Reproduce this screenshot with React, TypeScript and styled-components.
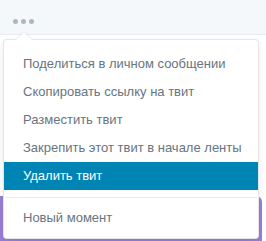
import React, { useState } from 'react';
import styled, { createGlobalStyle } from 'styled-components';

const GlobalStyle = createGlobalStyle`
  html, body {
    margin: 0;
    padding: 0;
    background: #fff;
    font-family: "Liberation Sans", Arial, sans-serif;
  }
`;

const items = [
  'Поделиться в личном сообщении',
  'Скопировать ссылку на твит',
  'Разместить твит',
  'Закрепить этот твит в начале ленты',
  'Удалить твит',
];

export default function App() {
  const [active, setActive] = useState(4);

  return (
    <Page>
      <GlobalStyle />
      <Footer>
        <MoreButton aria-label="Ещё">
          <Dot />
          <Dot />
          <Dot />
        </MoreButton>
      </Footer>
      <Body>
        <Spacer />
        <PurpleCard />
      </Body>

      <Menu>
        <Caret />
        {items.map((label, i) => (
          <Item key={label} selected={i === active} onMouseEnter={() => setActive(i)}>
            {label}
          </Item>
        ))}
        <Divider />
        <Item selected={active === 5} onMouseEnter={() => setActive(5)}>
          Новый момент
        </Item>
      </Menu>
    </Page>
  );
}

const Page = styled.div`
  position: relative;
  width: 266px;
  height: 241px;
  overflow: hidden;
  display: flex;
  flex-direction: column;
`;

const Footer = styled.div`
  height: 34px;
  background: #f5f8fa;
  border-bottom: 1px solid #e6ecf0;
  display: flex;
  align-items: center;
  padding-left: 13px;
`;

const MoreButton = styled.div`
  display: flex;
  gap: 3px;
  margin-top: 8px;
`;

const Dot = styled.span`
  width: 5px;
  height: 5px;
  border-radius: 50%;
  background: #aab8c2;
`;

const Body = styled.div`
  flex: 1;
  display: flex;
  flex-direction: column;
`;

const Spacer = styled.div`
  height: 161px;
`;

const PurpleCard = styled.div`
  flex: 1;
  margin: 0 4px 0 -6px;
  background: #9a7ed8;
  border-radius: 6px 6px 0 0;
`;

const Menu = styled.div`
  position: absolute;
  left: 3px;
  top: 39px;
  width: 254px;
  padding: 10px 0 6px;
  background: #fff;
  border: 1px solid rgba(0, 0, 0, 0.1);
  border-radius: 4px;
  box-shadow: 0 3px 8px rgba(0, 0, 0, 0.08);
`;

const Caret = styled.span`
  position: absolute;
  top: -8px;
  left: 12px;
  width: 0;
  height: 0;
  border-left: 8px solid transparent;
  border-right: 8px solid transparent;
  border-bottom: 8px solid #fff;
  filter: drop-shadow(0 -1px 0 rgba(0, 0, 0, 0.08));
`;

const Item = styled.div<{ selected: boolean }>`
  height: 28px;
  line-height: 28px;
  padding: 0 19px;
  font-size: 13px;
  white-space: nowrap;
  color: ${({ selected }) => (selected ? '#fff' : '#66757f')};
  background: ${({ selected }) => (selected ? '#0084b4' : 'transparent')};
  cursor: pointer;
`;

const Divider = styled.div`
  height: 1px;
  margin: 7px 1px 6px;
  background: #e6ecf0;
`;
